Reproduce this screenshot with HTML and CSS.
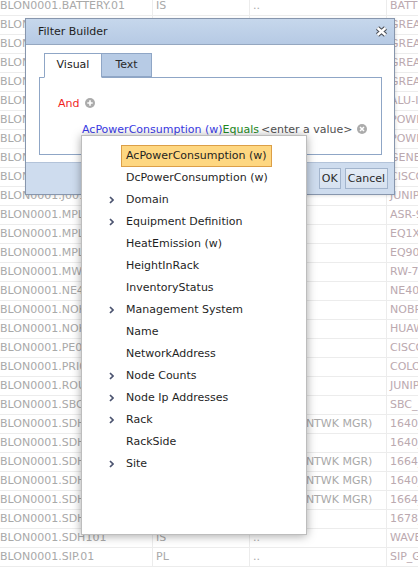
FILE: index.html
```html
<!DOCTYPE html>
<html>
<head>
<meta charset="utf-8">
<title>Filter Builder</title>
<link rel="stylesheet" href="styles.css">
</head>
<body>
<div class="sheet">
  <div class="row"><div class="c">BLON0001.BATTERY.01</div><div class="c">IS</div><div class="c">..</div><div class="c c4">BATTERY_CABINET</div></div>
  <div class="row"><div class="c">BLON0001.BBU.01</div><div class="c"></div><div class="c"></div><div class="c c4">GREAT_BRITAIN</div></div>
  <div class="row"><div class="c">BLON0001.BBU.02</div><div class="c"></div><div class="c"></div><div class="c c4">GREAT_BRITAIN</div></div>
  <div class="row"><div class="c">BLON0001.BBU.03</div><div class="c"></div><div class="c"></div><div class="c c4">GREAT_BRITAIN</div></div>
  <div class="row"><div class="c">BLON0001.BBU.04</div><div class="c"></div><div class="c"></div><div class="c c4">GREAT_BRITAIN</div></div>
  <div class="row"><div class="c">BLON0001.DSLAM.01</div><div class="c"></div><div class="c"></div><div class="c c4">ALU-ISAM</div></div>
  <div class="row"><div class="c">BLON0001.DC.01</div><div class="c"></div><div class="c"></div><div class="c c4">POWER_DC</div></div>
  <div class="row"><div class="c">BLON0001.DC.02</div><div class="c"></div><div class="c"></div><div class="c c4">POWER_DC</div></div>
  <div class="row"><div class="c">BLON0001.GEN.01</div><div class="c"></div><div class="c"></div><div class="c c4">GENERATOR</div></div>
  <div class="row"><div class="c">BLON0001.GW.01</div><div class="c"></div><div class="c"></div><div class="c c4">CISCO</div></div>
  <div class="row"><div class="c">BLON0001.J001</div><div class="c"></div><div class="c"></div><div class="c c4">JUNIPER</div></div>
  <div class="row"><div class="c">BLON0001.MPLS01</div><div class="c"></div><div class="c"></div><div class="c c4">ASR-9001</div></div>
  <div class="row"><div class="c">BLON0001.MPLS02</div><div class="c"></div><div class="c"></div><div class="c c4">EQ1X</div></div>
  <div class="row"><div class="c">BLON0001.MPLS03</div><div class="c"></div><div class="c"></div><div class="c c4">EQ90</div></div>
  <div class="row"><div class="c">BLON0001.MW01</div><div class="c"></div><div class="c"></div><div class="c c4">RW-7</div></div>
  <div class="row"><div class="c">BLON0001.NE4001</div><div class="c"></div><div class="c"></div><div class="c c4">NE40</div></div>
  <div class="row"><div class="c">BLON0001.NOKIA01</div><div class="c"></div><div class="c"></div><div class="c c4">NOBR</div></div>
  <div class="row"><div class="c">BLON0001.NOKIA02</div><div class="c"></div><div class="c"></div><div class="c c4">HUAWEI</div></div>
  <div class="row"><div class="c">BLON0001.PE01</div><div class="c"></div><div class="c"></div><div class="c c4">CISCO</div></div>
  <div class="row"><div class="c">BLON0001.PRI01</div><div class="c"></div><div class="c"></div><div class="c c4">COLO</div></div>
  <div class="row"><div class="c">BLON0001.ROUTER01</div><div class="c"></div><div class="c"></div><div class="c c4">JUNIPER</div></div>
  <div class="row"><div class="c">BLON0001.SBC01</div><div class="c"></div><div class="c"></div><div class="c c4">SBC_</div></div>
  <div class="row"><div class="c">BLON0001.SDH01</div><div class="c"></div><div class="c">ECI (SDH NTWK MGR)</div><div class="c c4">1640_SM</div></div>
  <div class="row"><div class="c">BLON0001.SDH02</div><div class="c"></div><div class="c"></div><div class="c c4">1640_SM</div></div>
  <div class="row"><div class="c">BLON0001.SDH03</div><div class="c"></div><div class="c">ECI (SDH NTWK MGR)</div><div class="c c4">1664_SM</div></div>
  <div class="row"><div class="c">BLON0001.SDH04</div><div class="c"></div><div class="c">ECI (SDH NTWK MGR)</div><div class="c c4">1640_SM</div></div>
  <div class="row"><div class="c">BLON0001.SDH05</div><div class="c"></div><div class="c">ECI (SDH NTWK MGR)</div><div class="c c4">1664_SM</div></div>
  <div class="row"><div class="c">BLON0001.SDH06</div><div class="c"></div><div class="c"></div><div class="c c4">1678_MC</div></div>
  <div class="row"><div class="c">BLON0001.SDH101</div><div class="c">IS</div><div class="c">..</div><div class="c c4">WAVESTAR</div></div>
  <div class="row"><div class="c">BLON0001.SIP.01</div><div class="c">PL</div><div class="c">..</div><div class="c c4">SIP_GW</div></div>
</div>

<div class="dialog">
  <div class="dlg-title">
    <span>Filter Builder</span>
    <svg class="close" width="13" height="11" viewBox="0 0 13 11">
      <path d="M2.5 2 L10.5 9 M10.5 2 L2.5 9" stroke="#4b4f57" stroke-width="4.6" fill="none"/>
      <path d="M2.5 2 L10.5 9 M10.5 2 L2.5 9" stroke="#ffffff" stroke-width="2.4" fill="none"/>
    </svg>
  </div>
  <div class="dlg-body">
    <div class="tabs">
      <div class="tab active">Visual</div>
      <div class="tab t2">Text</div>
    </div>
    <div class="panel">
      <div class="expr">
        <span class="and">And</span>
        <svg class="ico plus" width="10" height="10" viewBox="0 0 10 10">
          <circle cx="5" cy="5" r="5" fill="#ababab"/>
          <path d="M5 2.3 V7.7 M2.3 5 H7.7" stroke="#fff" stroke-width="1.6"/>
        </svg>
      </div>
      <div class="expr expr2">
        <span class="field">AcPowerConsumption (w)</span><span class="op">Equals</span><span class="val">&lt;enter a value&gt;</span>
        <svg class="ico del" width="10" height="10" viewBox="0 0 10 10">
          <circle cx="5" cy="5" r="5" fill="#ababab"/>
          <path d="M3 3 L7 7 M7 3 L3 7" stroke="#fff" stroke-width="1.5"/>
        </svg>
      </div>
    </div>
  </div>
  <div class="dlg-foot">
    <div class="btn">OK</div>
    <div class="btn">Cancel</div>
  </div>
</div>

<div class="menu">
  <div class="mi sel"><span class="arr"></span><span class="lbl">AcPowerConsumption (w)</span></div>
  <div class="mi"><span class="arr"></span><span class="lbl">DcPowerConsumption (w)</span></div>
  <div class="mi"><span class="arr"><svg width="5" height="8" viewBox="0 0 5 8"><path d="M1 1 L4 4 L1 7" stroke="#4c5470" stroke-width="1.7" fill="none"/></svg></span><span class="lbl">Domain</span></div>
  <div class="mi"><span class="arr"><svg width="5" height="8" viewBox="0 0 5 8"><path d="M1 1 L4 4 L1 7" stroke="#4c5470" stroke-width="1.7" fill="none"/></svg></span><span class="lbl">Equipment Definition</span></div>
  <div class="mi"><span class="arr"></span><span class="lbl">HeatEmission (w)</span></div>
  <div class="mi"><span class="arr"></span><span class="lbl">HeightInRack</span></div>
  <div class="mi"><span class="arr"></span><span class="lbl">InventoryStatus</span></div>
  <div class="mi"><span class="arr"><svg width="5" height="8" viewBox="0 0 5 8"><path d="M1 1 L4 4 L1 7" stroke="#4c5470" stroke-width="1.7" fill="none"/></svg></span><span class="lbl">Management System</span></div>
  <div class="mi"><span class="arr"></span><span class="lbl">Name</span></div>
  <div class="mi"><span class="arr"></span><span class="lbl">NetworkAddress</span></div>
  <div class="mi"><span class="arr"><svg width="5" height="8" viewBox="0 0 5 8"><path d="M1 1 L4 4 L1 7" stroke="#4c5470" stroke-width="1.7" fill="none"/></svg></span><span class="lbl">Node Counts</span></div>
  <div class="mi"><span class="arr"><svg width="5" height="8" viewBox="0 0 5 8"><path d="M1 1 L4 4 L1 7" stroke="#4c5470" stroke-width="1.7" fill="none"/></svg></span><span class="lbl">Node Ip Addresses</span></div>
  <div class="mi"><span class="arr"><svg width="5" height="8" viewBox="0 0 5 8"><path d="M1 1 L4 4 L1 7" stroke="#4c5470" stroke-width="1.7" fill="none"/></svg></span><span class="lbl">Rack</span></div>
  <div class="mi"><span class="arr"></span><span class="lbl">RackSide</span></div>
  <div class="mi"><span class="arr"><svg width="5" height="8" viewBox="0 0 5 8"><path d="M1 1 L4 4 L1 7" stroke="#4c5470" stroke-width="1.7" fill="none"/></svg></span><span class="lbl">Site</span></div>
</div>
</body>
</html>
```

FILE: styles.css
```css
html, body {
  margin: 0;
  padding: 0;
}
body {
  width: 418px;
  height: 568px;
  overflow: hidden;
  position: relative;
  background: #ffffff;
  font-family: "DejaVu Sans", Verdana, sans-serif;
  font-size: 11px;
}

/* background grid */
.sheet {
  margin: -3px 0 0 -3px;
}
.row {
  display: grid;
  grid-template-columns: 156px 97px 137px 200px;
  height: 19px;
}
.c {
  box-sizing: border-box;
  height: 19px;
  border-right: 1px solid #ececec;
  border-bottom: 1px solid #ececec;
  padding-left: 3px;
  line-height: 18px;
  white-space: nowrap;
  overflow: hidden;
  color: #a9a9a9;
}
.c4 {
  color: #bba9af;
  border-right: none;
}

/* dialog */
.dialog {
  position: absolute;
  left: 25px;
  top: 18px;
  width: 370px;
  height: 177px;
  box-sizing: border-box;
  border: 1px solid #8796ad;
  background: #ffffff;
  box-shadow: 1px 1px 3px rgba(0, 0, 0, 0.12);
}
.dlg-title {
  height: 25px;
  border-bottom: 1px solid #95a7c0;
  background: linear-gradient(#c6d7ec, #b6cae4);
  display: flex;
  align-items: center;
  justify-content: space-between;
  padding: 0 6px 0 12px;
  color: #1e1e1e;
}
.close {
  display: block;
}
.dlg-body {
  padding: 8px 12px 7px 13px;
}
.tabs {
  display: flex;
  margin-left: 5px;
  height: 24px;
  position: relative;
  z-index: 1;
}
.tab {
  box-sizing: border-box;
  height: 24px;
  border: 1px solid #8fa6c6;
  line-height: 22px;
  text-align: center;
  color: #222222;
}
.tab.active {
  width: 58px;
  height: 25px;
  background: #ffffff;
  border-bottom-color: #ffffff;
}
.tab.t2 {
  width: 50px;
  border-left: none;
  background: #b7cbe5;
  color: #2a2a2a;
}
.panel {
  height: 78px;
  box-sizing: border-box;
  border: 1px solid #8fa6c6;
  padding: 16px 0 0 18px;
}
.expr {
  height: 18px;
  display: flex;
  align-items: center;
  white-space: nowrap;
}
.expr2 {
  margin-top: 8px;
  margin-left: 24px;
}
.and {
  color: #f01f1f;
}
.ico {
  display: block;
  flex: none;
}
.plus {
  margin-left: 6px;
}
.field {
  color: #3a3ae6;
}
.op {
  color: #238a23;
  margin-right: 2px;
}
.val {
  color: #505050;
}
.del {
  margin-left: 4px;
}
.dlg-foot {
  height: 32px;
  box-sizing: border-box;
  border-top: 1px solid #b3c3d9;
  background: #cedcee;
  display: flex;
  justify-content: flex-end;
  align-items: center;
  gap: 4px;
  padding-right: 6px;
}
.btn {
  height: 21px;
  box-sizing: border-box;
  border: 1px solid #a2b4cc;
  background: linear-gradient(#e4ecf6, #d6e1ef);
  padding: 0 2px;
  line-height: 19px;
  color: #2a2a2a;
}

/* dropdown menu */
.menu {
  position: absolute;
  left: 81px;
  top: 135px;
  width: 226px;
  height: 400px;
  box-sizing: border-box;
  border: 1px solid #bdbdbd;
  background: #ffffff;
  box-shadow: 0 1px 9px rgba(0, 0, 0, 0.35);
  padding-top: 9px;
  display: flex;
  flex-direction: column;
  align-items: flex-start;
  z-index: 2;
}
.mi {
  display: flex;
  align-items: center;
  height: 22px;
}
.arr {
  width: 39px;
  box-sizing: border-box;
  padding-left: 27px;
  display: flex;
  align-items: center;
}
.arr svg {
  display: block;
}
.lbl {
  box-sizing: border-box;
  height: 22px;
  line-height: 20px;
  padding: 0 4px;
  border: 1px solid transparent;
  color: #1f1f1f;
  white-space: nowrap;
}
.mi.sel .lbl {
  background: #fed781;
  border-color: #dc9f47;
}
```
